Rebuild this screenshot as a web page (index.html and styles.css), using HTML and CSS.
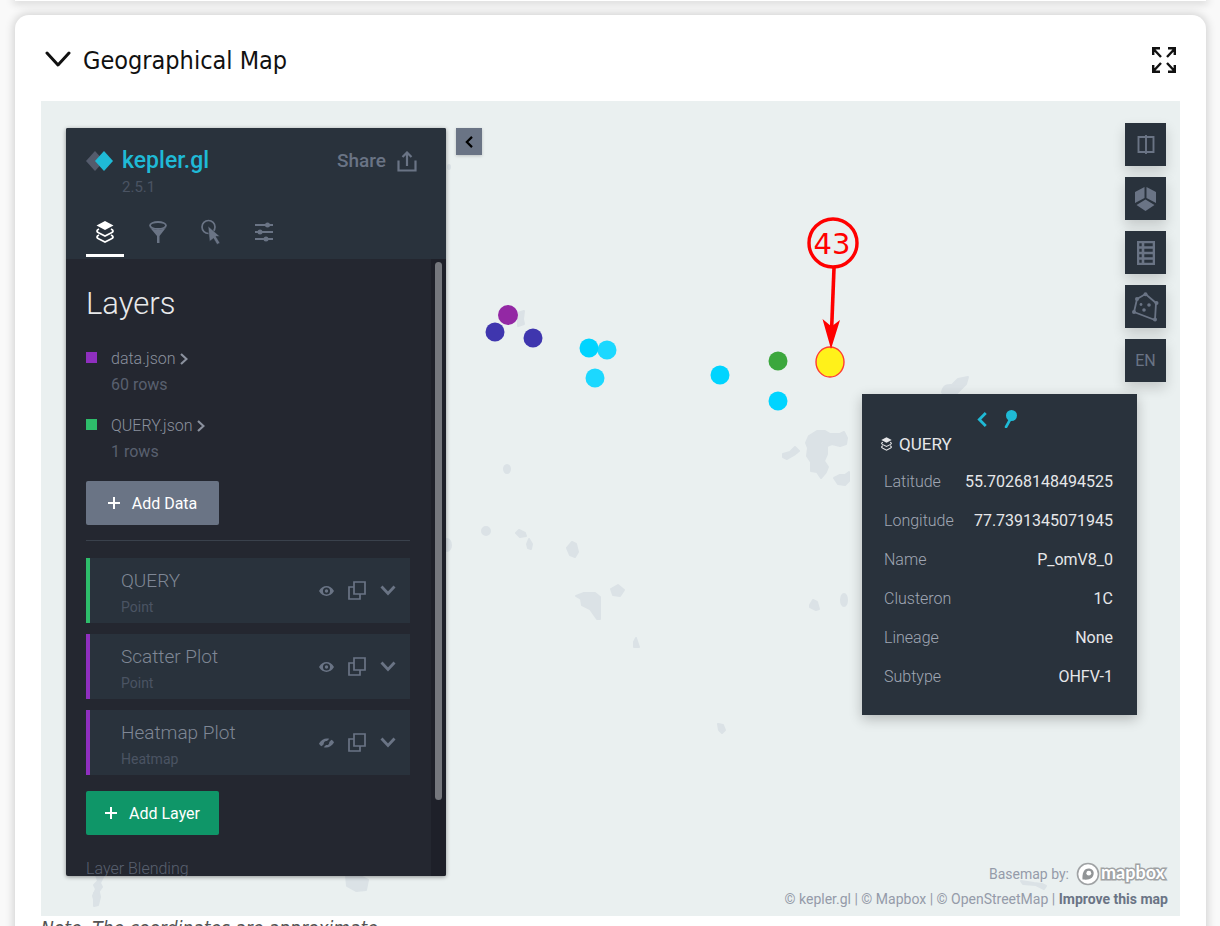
FILE: index.html
```
<!DOCTYPE html>
<html lang="en">
<head>
<meta charset="utf-8">
<meta name="viewport" content="width=device-width, initial-scale=1">
<title>Geographical Map</title>
<link rel="stylesheet" href="styles.css">
</head>
<body>
<svg class="sprite" aria-hidden="true">
  <symbol id="layers" viewBox="0 0 18 22"><path d="M9 0 17.500 4.500 9 9 .5 4.500Z" fill="currentColor"/><path d="M3 8C0 9.500 .5 11 3 12L9 15 15 12C17.500 11 18 9.500 15 8M3 14C0 15.500 .5 17 3 18L9 21 15 18C17.500 17 18 15.500 15 14" fill="none" stroke="currentColor" stroke-width="1.700"/></symbol>
  <symbol id="eye" viewBox="0 0 16 12"><path d="M0 6C4-1 12-1 16 6 12 13 4 13 0 6ZM8 2.200A3.800 3.800 0 1 0 8 9.800 3.800 3.800 0 0 0 8 2.200Z" fill="currentColor" fill-rule="evenodd"/><circle cx="8" cy="6" r="1.800" fill="currentColor"/></symbol>
  <symbol id="eye-off" viewBox="0 0 16 12"><path d="M0 6.500C3 1.500 7 .5 11 1.500L8.500 3.800C6 3.500 5 5 5 7.200L2.800 9.500C1.500 9 .7 8 0 6.500ZM16 5.500C13 10.500 9 11.500 5 10.500L7.500 8.200C10 8.500 11 7 11 4.800L13.200 2.500C14.500 3 15.300 4 16 5.500Z" fill="currentColor"/></symbol>
  <symbol id="copy" viewBox="0 0 18 19"><path d="M6 1H17V13H6ZM6 6H1V18H12V13" fill="none" stroke="currentColor" stroke-width="1.700"/></symbol>
  <symbol id="down" viewBox="0 0 16 11"><path d="M1.500 1.500 8 8.500 14.500 1.500" fill="none" stroke="currentColor" stroke-width="2.800"/></symbol>
  <symbol id="right" viewBox="0 0 8 12"><path d="M1 1 6.500 6 1 11" fill="none" stroke="currentColor" stroke-width="2.200"/></symbol>
  <symbol id="left" viewBox="0 0 9 14"><path d="M8 1 2 7 8 13" fill="none" stroke="currentColor" stroke-width="2.600"/></symbol>
  <symbol id="plus" viewBox="0 0 12 12"><path d="M6 0V12M0 6H12" stroke="currentColor" stroke-width="2"/></symbol>
</svg>
<div class="page">
  <div class="prev-card"></div>
  <main class="card">
    <header class="card-head">
      <button class="collapse" aria-label="Collapse section"><svg width="26" height="18" viewBox="0 0 26 18"><path d="M2 2 13 14 24 2" fill="none" stroke="currentColor" stroke-width="3" stroke-linecap="round" stroke-linejoin="round"/></svg></button>
      <h1>Geographical Map</h1>
      <button class="expand" aria-label="Full screen"><svg width="24" height="26" viewBox="0 0 24 26"><path d="M9 10 1.500 2M1.200 8V1.200H8M15 10 22.500 2M16 1.200H22.800V8M9 16 1.500 24M1.200 18V24.800H8M15 16 22.500 24M16 24.800H22.800V18" fill="none" stroke="currentColor" stroke-width="2.400"/></svg></button>
    </header>

    <section class="map" aria-label="Map">
      <svg class="canvas" width="100%" height="100%">
        <g class="water">
          <path d="M477 212l6-2-1 8 1 5-6 2z"/>
          <path d="M768 335l8-5h8l5 3h10l4-2 3 6-1 6-6 2-8-2-5 2v8l-3 7 4 6-2 5-5 6-4-6-6-1v-9l-4-6 1-8-2-5z"/>
          <path d="M742 353l7-2 5-5 4 4-5 4-7 4-4-2z"/>
          <path d="M793 377l6-3h5l4-3v9l-4 4-7-1z"/>
          <path d="M901 291c2-8 7-7 10-7l6-6 10-2-2 7-12 12h-10z"/>
          <ellipse cx="466" cy="368" rx="3" ry="4"/><ellipse cx="445" cy="430" rx="4" ry="4"/>
          <path d="M475 432l3-3 6 3 1 3-6 1zM486 443l2-5 3 5-1 5-3-1z"/>
          <ellipse cx="406" cy="444" rx="4" ry="6"/>
          <path d="M526 447l5-6 4 2 2 8-3 5-5-2z"/>
          <path d="M535 495l8-3h11l5 4v22h-3l-7-10-8-4-1-6z"/>
          <path d="M570 488l7-4 6 5-4 6-7-1z"/>
          <path d="M593 541l2-4 3 9h-5z"/>
          <path d="M769 504l3-5 4 2 2 7-3 1-6-3z"/>
          <ellipse cx="803" cy="499" rx="3" ry="6"/>
          <path d="M677 623l5 1 2 5-3 3-3-3z"/>
          <path d="M55 774h8l-4 8 2 4-5 7 1 7-3 2-2-7 3-7-2-4 4-4z"/>
          <path d="M53 792l5-1 1 5-2 8-4 1z"/>
          <path d="M305 774h12l10 5-2 10-10 1-9-5z"/>
          <path d="M980 780l13 2 8 1 4 2-2 3-8-4-13-1z"/>
          <ellipse cx="408" cy="66" rx="1" ry="2"/>
        </g>
        <g>
          <circle cx="467" cy="214" r="10" fill="#9328a4"/>
          <circle cx="454" cy="231" r="9.500" fill="#3f36ae"/><circle cx="492" cy="237" r="9.500" fill="#3f36ae"/>
          <circle cx="566" cy="249" r="9.500" fill="#1cd8ff"/><circle cx="548" cy="247" r="9.500" fill="#00d4ff"/><circle cx="554" cy="277" r="9.500" fill="#1cd8ff"/>
          <circle cx="679" cy="274" r="9.500" fill="#00d4ff"/><circle cx="737" cy="300" r="9.500" fill="#00d4ff"/>
          <circle cx="737" cy="260" r="9.500" fill="#3ca73d"/>
          <ellipse cx="789" cy="261" rx="14" ry="15" fill="#fff11a" stroke="#ff3b30" stroke-width="1.400"/>
        </g>
        <g class="callout">
          <circle cx="792" cy="142" r="24" fill="none" stroke="#f00" stroke-width="3.400"/>
          <text x="791" y="153" text-anchor="middle">43</text>
          <path d="M793 167 790.500 231" stroke="#f00" stroke-width="3.600"/>
          <path d="M790 248 781.500 218 790.500 225.500 799 219Z" fill="#f00"/>
        </g>
      </svg>

      <aside class="side">
        <div class="side-head">
          <div class="brand">
            <svg width="27" height="20" viewBox="0 0 27 20"><path d="M9 0 18 10 9 20 0 10Z" fill="#545b6c"/><path d="M18 0 27 10 18 20 9 10Z" fill="#1fbad6"/></svg>
            <a class="name" href="#">kepler.gl</a>
            <button class="share">Share <svg width="20" height="21" viewBox="0 0 20 21"><path d="M1.500 9.500V19.500H18.500V9.500M10 15V2M5.500 6 10 1.500 14.500 6" fill="none" stroke="currentColor" stroke-width="2.200"/></svg></button>
          </div>
          <p class="version">2.5.1</p>
          <nav class="tabs">
            <button class="tab active" aria-label="Layers"><svg width="18" height="22"><use href="#layers"/></svg></button>
            <button class="tab" aria-label="Filters"><svg width="18" height="22" viewBox="0 0 18 22"><ellipse cx="9" cy="4.500" rx="8" ry="3.500" fill="none" stroke="currentColor" stroke-width="1.800"/><path d="M.5 6C4 9.500 14 9.500 17.500 6L10.500 15V22H8V15Z" fill="currentColor"/></svg></button>
            <button class="tab" aria-label="Interactions"><svg width="20" height="26" viewBox="0 0 20 26"><circle cx="7.500" cy="8" r="6.500" fill="none" stroke="currentColor" stroke-width="1.700"/><path d="M7 7 19 17.500H15L19 24 16 25.500 12.500 19.500 8.500 22.500Z" fill="currentColor" stroke="#29323c" stroke-width=".6"/></svg></button>
            <button class="tab" aria-label="Base map"><svg width="18" height="20" viewBox="0 0 18 20"><path d="M0 3H18M0 10H18M0 17H18" stroke="currentColor" stroke-width="1.800"/><circle cx="12.500" cy="3" r="2.500" fill="currentColor"/><circle cx="5" cy="10" r="2.500" fill="currentColor"/><circle cx="11" cy="17" r="2.500" fill="currentColor"/></svg></button>
          </nav>
        </div>
        <div class="side-body">
          <div class="side-content">
            <h2>Layers</h2>
            <div class="dataset purple"><a href="#">data.json <svg width="8" height="12"><use href="#right"/></svg></a><p>60 rows</p></div>
            <div class="dataset green"><a href="#">QUERY.json <svg width="8" height="12"><use href="#right"/></svg></a><p>1 rows</p></div>
            <button class="add"><svg width="12" height="12"><use href="#plus"/></svg>Add Data</button>
            <hr>
            <ul class="layers">
              <li class="green"><div><h3>QUERY</h3><p>Point</p></div>
                <button aria-label="Hide QUERY"><svg width="15" height="12"><use href="#eye"/></svg></button><button aria-label="Duplicate QUERY"><svg width="18" height="19"><use href="#copy"/></svg></button><button aria-label="Settings of QUERY"><svg width="16" height="11"><use href="#down"/></svg></button></li>
              <li class="purple"><div><h3>Scatter Plot</h3><p>Point</p></div>
                <button aria-label="Hide Scatter Plot"><svg width="15" height="12"><use href="#eye"/></svg></button><button aria-label="Duplicate Scatter Plot"><svg width="18" height="19"><use href="#copy"/></svg></button><button aria-label="Settings of Scatter Plot"><svg width="16" height="11"><use href="#down"/></svg></button></li>
              <li class="purple"><div><h3>Heatmap Plot</h3><p>Heatmap</p></div>
                <button aria-label="Show Heatmap Plot"><svg width="15" height="12"><use href="#eye-off"/></svg></button><button aria-label="Duplicate Heatmap Plot"><svg width="18" height="19"><use href="#copy"/></svg></button><button aria-label="Settings of Heatmap Plot"><svg width="16" height="11"><use href="#down"/></svg></button></li>
            </ul>
            <button class="add primary"><svg width="12" height="12"><use href="#plus"/></svg>Add Layer</button>
            <p class="blending">Layer Blending</p>
          </div>
          <div class="track"><div class="thumb"></div></div>
        </div>
      </aside>
      <button class="hide" aria-label="Hide panel"><svg width="8" height="12"><use href="#left"/></svg></button>

      <div class="controls">
        <button aria-label="Split map"><svg width="18" height="19" viewBox="0 0 18 19"><path d="M1.500 2H16.500V17H1.500ZM9 0V19" fill="none" stroke="currentColor" stroke-width="1.900"/></svg></button>
        <button aria-label="3D map"><svg width="21" height="24" viewBox="0 0 21 24"><path d="M9.500 0V11L0 16V5ZM11.500 0 21 5V16L11.500 11ZM10.500 12.500 19.500 18 10.500 24 1.500 18Z" fill="currentColor"/></svg></button>
        <button aria-label="Legend"><svg width="18" height="24" viewBox="0 0 18 24"><path d="M1 1H17V23H1ZM1 6.500H17M1 12H17M1 17.500H17M6 1V23" fill="none" stroke="currentColor" stroke-width="2.600"/></svg></button>
        <button aria-label="Draw"><svg width="27" height="30" viewBox="0 0 27 30"><path d="M5 7 13.500 2 24 11 23 28 2 20Z" fill="none" stroke="currentColor" stroke-width="1.800"/><g fill="currentColor"><circle cx="5" cy="7" r="2"/><circle cx="13.500" cy="2.200" r="2"/><circle cx="24.500" cy="11" r="2"/><circle cx="23" cy="27.500" r="2"/><circle cx="2" cy="20" r="2"/><circle cx="9" cy="12.500" r="1.400"/><circle cx="17" cy="13" r="1.800"/><circle cx="12" cy="18" r="1.800"/></g></svg></button>
        <button>EN</button>
      </div>

      <div class="popup">
        <div class="popup-actions">
          <button aria-label="Previous"><svg width="10" height="15"><use href="#left"/></svg></button>
          <button aria-label="Pin"><svg width="13" height="18" viewBox="0 0 13 18"><circle cx="7.500" cy="5.500" r="5.500" fill="currentColor"/><path d="M7 8 2 17" stroke="currentColor" stroke-width="2.600" stroke-linecap="round"/></svg></button>
        </div>
        <h3><svg width="11" height="14"><use href="#layers"/></svg>QUERY</h3>
        <table>
          <tr><th scope="row">Latitude</th><td>55.70268148494525</td></tr>
          <tr><th scope="row">Longitude</th><td>77.7391345071945</td></tr>
          <tr><th scope="row">Name</th><td>P_omV8_0</td></tr>
          <tr><th scope="row">Clusteron</th><td>1C</td></tr>
          <tr><th scope="row">Lineage</th><td>None</td></tr>
          <tr><th scope="row">Subtype</th><td>OHFV-1</td></tr>
        </table>
      </div>

      <footer class="credits">
        <p>Basemap by: <a href="#" aria-label="Mapbox"><svg width="92" height="26" viewBox="0 0 92 26"><circle cx="12" cy="13" r="10.500" fill="#fff" stroke="#a0a3a5" stroke-width="1.600"/><path d="M6.500 18.500C6 12 8 7 13.500 7.500 18 8 19 13 16 16.500 13.500 19 10 18.800 6.500 18.500Z" fill="#929597"/><circle cx="12.800" cy="12.200" r="2.400" fill="#fff"/><text class="mapbox" x="25" y="18">mapbox</text></svg></a></p>
        <p><a href="#">© kepler.gl</a> | <a href="#">© Mapbox</a> | <a href="#">© OpenStreetMap</a> | <a class="strong" href="#">Improve this map</a></p>
      </footer>
    </section>
    <p class="note">Note. The coordinates are approximate.</p>
  </main>
</div>
</body>
</html>
```
FILE: styles.css
```
* { box-sizing: border-box; }
body { margin: 0; background: #f9f9f9; font-family: Roboto, sans-serif; color: #111; }
h1, h2, h3, p, ul { margin: 0; padding: 0; font-weight: 400; }
button { border: 0; padding: 0; background: none; color: inherit; font: inherit; display: flex; align-items: center; justify-content: center; }
a { color: inherit; text-decoration: none; }
svg { display: block; flex: none; }
.sprite { position: absolute; width: 0; height: 0; }

.page { height: 100vh; overflow: hidden; padding: 0 14px 0 15px; }
.prev-card { height: 1px; margin-bottom: 14px; background: #fff; box-shadow: 0 0 8px 2px rgba(0, 0, 0, .2); }
.card { position: relative; padding: 0 26px 40px; background: #fff; border-radius: 14px; box-shadow: 0 0 8px 2px rgba(0, 0, 0, .15); }
.card-head { display: flex; align-items: center; height: 86px; padding: 4px 4px 0; }
.card-head h1 { flex: 1; margin-left: 12px; padding-top: 2px; font: 25px/32px "DejaVu Sans Condensed", "DejaVu Sans", sans-serif; }

.map { position: relative; display: flex; align-items: flex-start; height: 815px; padding: 27px 14px 0 25px; background: #eaf0f0; overflow: hidden; }
.canvas { position: absolute; inset: 0; }
.water { fill: #dbe2e6; stroke: #dbe2e6; stroke-width: 2; stroke-linejoin: round; }
.callout text { font: 29px "DejaVu Sans", sans-serif; fill: #f00; }

.side { position: relative; display: flex; flex-direction: column; width: 380px; height: 748px; background: #242730; color: #6a7485; border-radius: 2px; box-shadow: 0 1px 4px rgba(0, 0, 0, .4); overflow: hidden; }
.side-head { height: 131px; padding: 20px 20px 0; background: #29323c; }
.brand { display: flex; align-items: center; height: 26px; padding-right: 9px; }
.name { flex: 1; margin-left: 9px; color: #1fbad6; font-size: 23px; font-weight: 500; line-height: 26px; }
.share { gap: 11px; font-size: 19px; font-weight: 500; line-height: 26px; }
.version { padding: 3px 0 0 36px; color: #4b5463; font-size: 15px; line-height: 20px; }
.tabs { display: flex; gap: 15px; margin-top: 12px; }
.tab { width: 38px; height: 48px; border-bottom: 3px solid transparent; }
.tab.active { color: #fff; border-color: #fff; }

.side-body { display: flex; flex: 1; min-height: 0; }
.side-content { flex: 1; padding: 26px 21px 0 20px; }
.side-content h2 { margin-bottom: 23px; color: #e8e9eb; font-size: 31px; font-weight: 300; line-height: 38px; }
.dataset { position: relative; padding-left: 25px; margin-bottom: 15px; font-size: 16px; font-weight: 300; line-height: 26px; }
.dataset::before { content: ""; position: absolute; left: 0; top: 6px; width: 11px; height: 11px; background: currentColor; }
.purple { color: #8f2fbf; }
.green { color: #2ebd6b; }
.dataset a { display: flex; align-items: center; gap: 4px; color: #8b919e; }
.dataset p { color: #59606f; }
.add { gap: 12px; width: 133px; height: 44px; border-radius: 2px; background: #6a7485; color: #fff; font-size: 16px; }
.dataset + .add { margin-top: 16px; }
.add.primary { background: #0f9668; }
hr { height: 1px; margin: 15px 0 17px; border: 0; background: #3a414c; }
.layers { display: grid; gap: 11px; margin-bottom: 16px; list-style: none; }
.layers li { display: flex; align-items: center; gap: 14px; height: 65px; padding: 0 14px 0 31px; border-left: 4px solid currentColor; background: #29323c; }
.layers div { flex: 1; padding-top: 6px; }
.layers h3 { color: #7f8795; font-size: 19px; font-weight: 300; line-height: 26px; }
.layers p { color: #4b5463; font-size: 14px; line-height: 26px; }
.layers button { color: #6a7485; }
.blending { margin-top: 22px; color: #59606f; font-size: 16px; font-weight: 300; line-height: 24px; white-space: nowrap; }
.track { flex: none; width: 15px; padding: 3px 4px; background: #1e2029; }
.thumb { width: 7px; height: 538px; border-radius: 4px; background: #75777d; }

.hide { position: relative; width: 26px; height: 27px; margin-left: 10px; background: #6a7485; color: #000; box-shadow: 0 1px 3px rgba(0, 0, 0, .2); }
.controls { position: relative; display: grid; gap: 11px; margin: -5px 0 0 auto; }
.controls button { width: 41px; height: 43px; background: #29323c; color: #6a7485; font-size: 16px; box-shadow: 0 6px 12px rgba(0, 0, 0, .16); }

.popup { position: absolute; left: 821px; top: 293px; width: 275px; padding: 14px 24px 19px 22px; background: #29323c; color: #e6e7e9; box-shadow: 0 4px 12px rgba(0, 0, 0, .24); }
.popup-actions { display: flex; justify-content: center; gap: 17px; height: 22px; margin-right: 4px; color: #1fbad6; }
.popup h3 { display: flex; align-items: center; gap: 7px; margin: 3px 0 7px -3px; font-size: 17px; line-height: 22px; }
.popup table { width: 100%; border-collapse: collapse; font-size: 16px; line-height: 18px; }
.popup th, .popup td { height: 39px; padding: 0; font-weight: 400; }
.popup th { color: #a0a7b4; font-weight: 300; text-align: left; }
.popup td { text-align: right; }

.credits { position: absolute; right: 12px; bottom: 5px; color: #959ba9; font-size: 14px; line-height: 24px; text-align: right; white-space: nowrap; }
.credits p:first-child { display: flex; align-items: center; justify-content: flex-end; gap: 7px; }
.credits .strong { color: #6a7485; font-weight: 700; }
.mapbox { font: 700 18px Lato, sans-serif; fill: #fff; stroke: #a0a3a5; stroke-width: 3; paint-order: stroke; }
.note { font: italic 19px/24px "DejaVu Sans Condensed", "DejaVu Sans", sans-serif; color: #555; }
```
